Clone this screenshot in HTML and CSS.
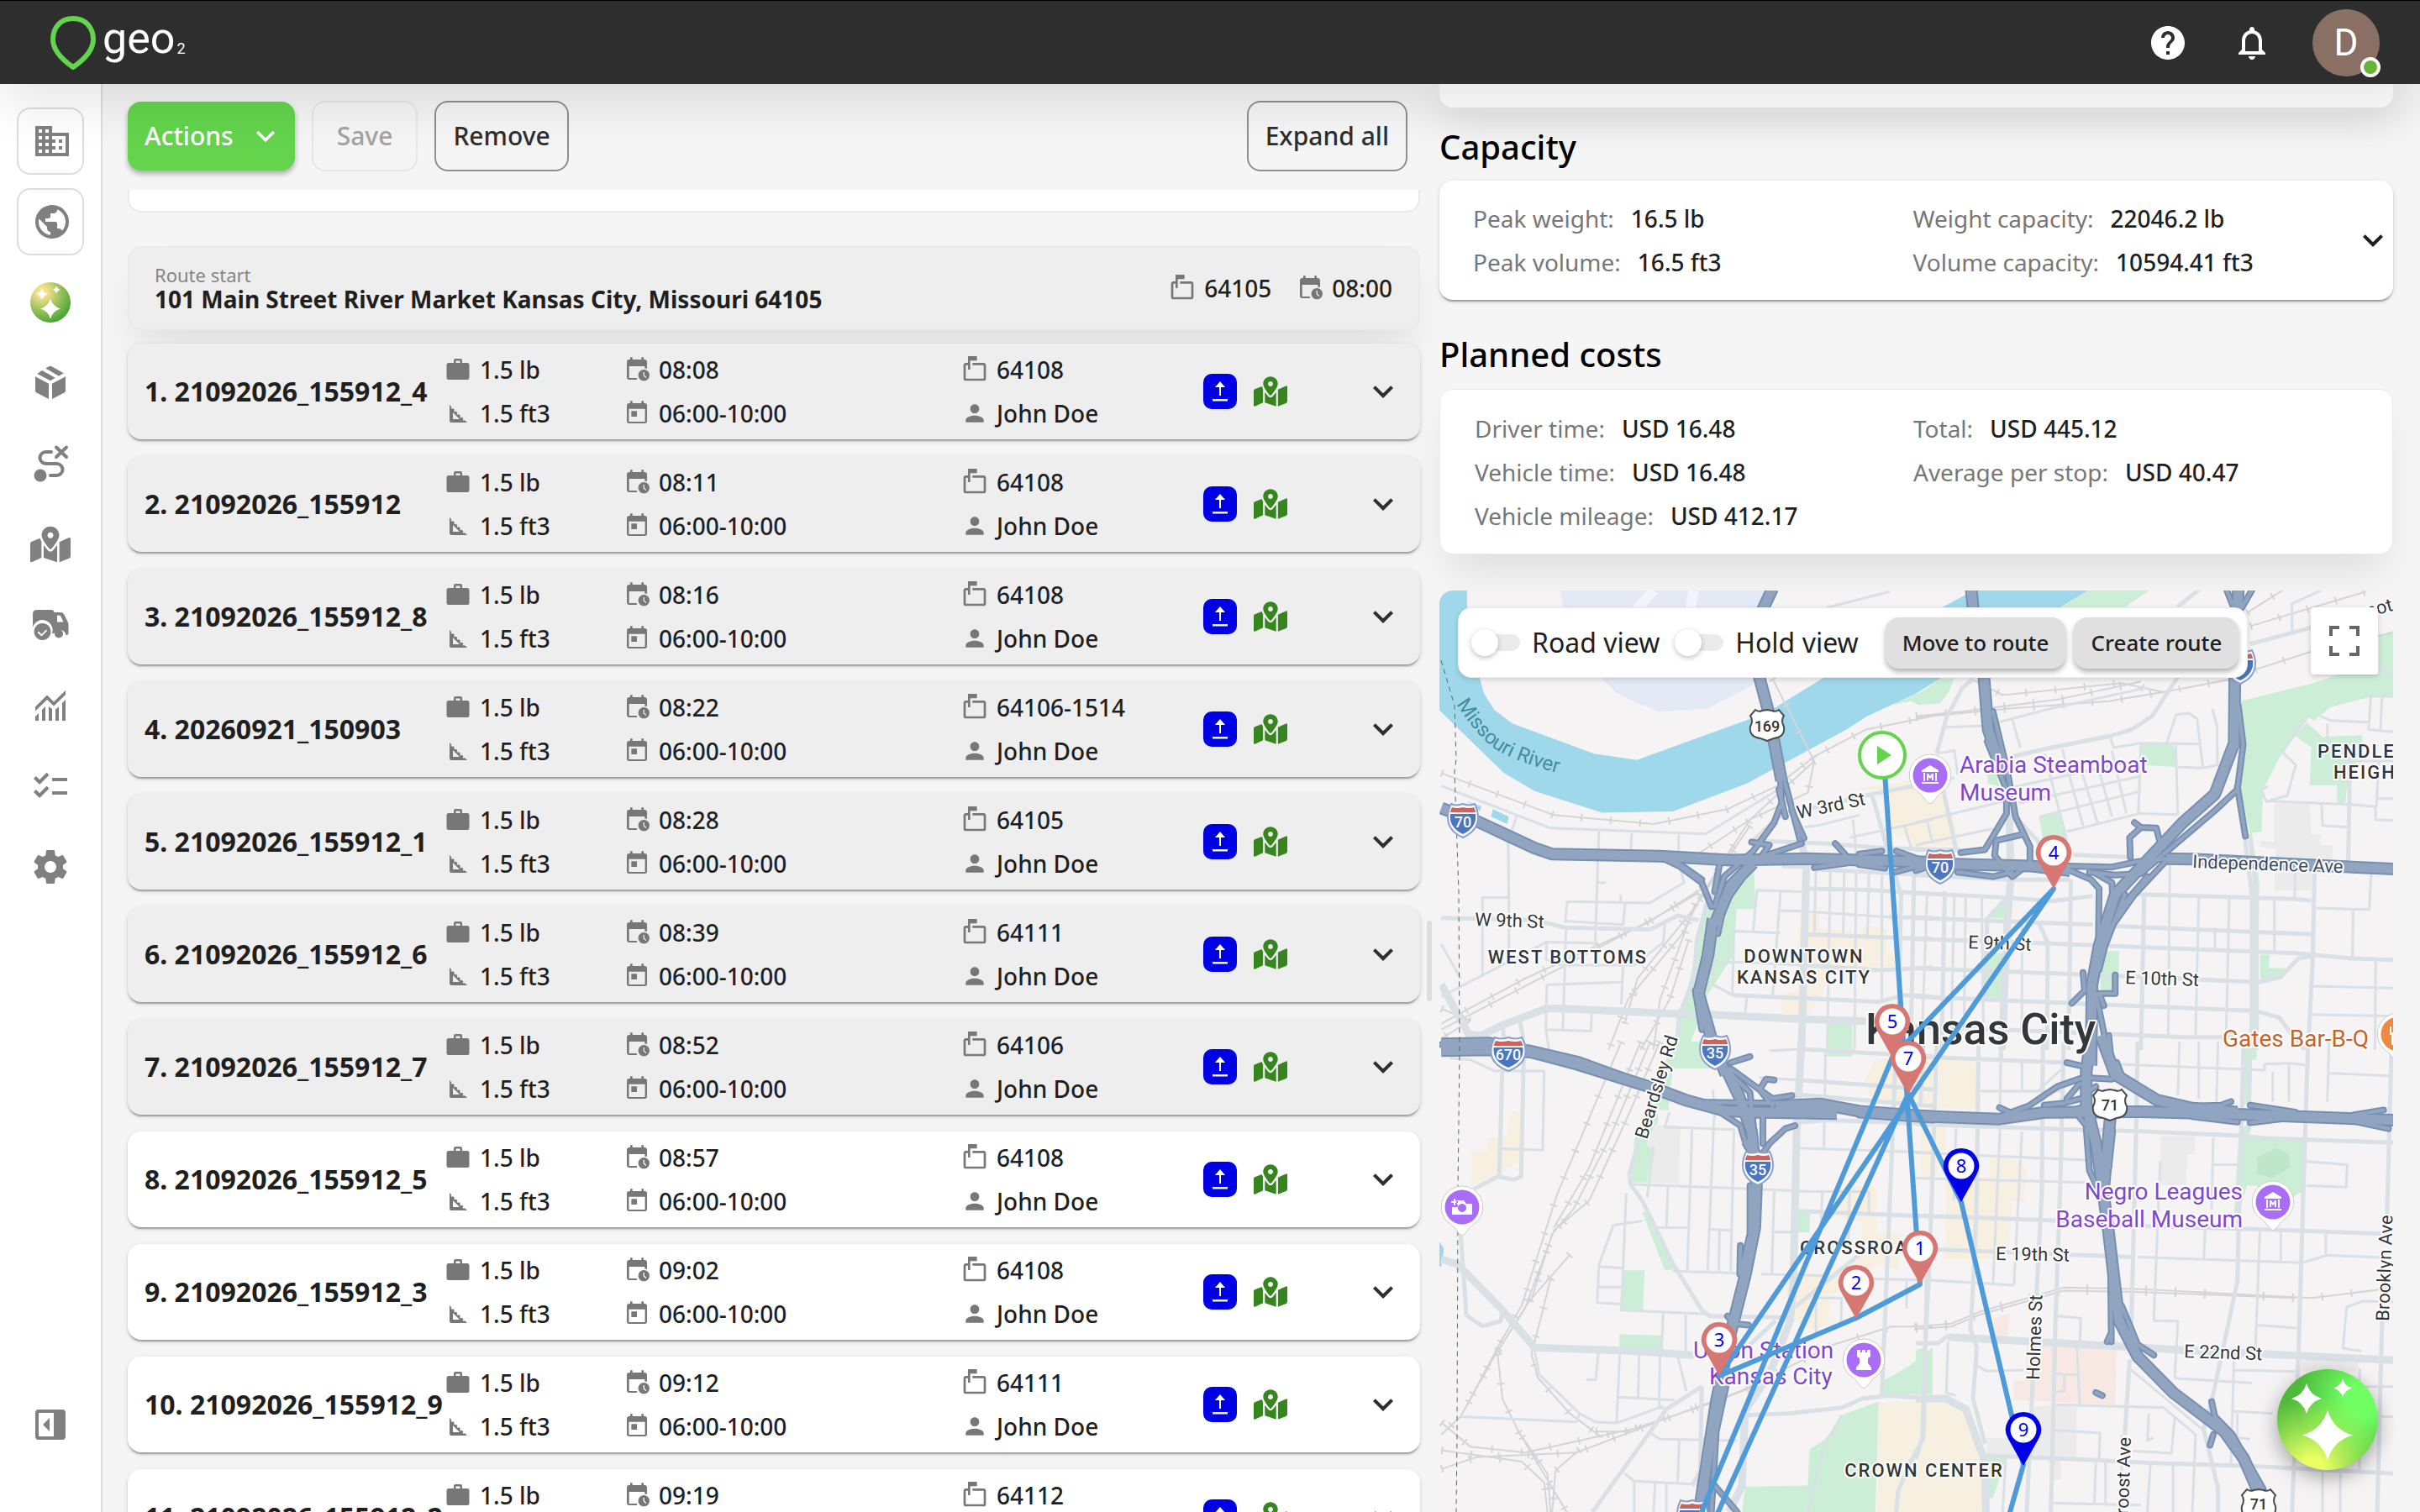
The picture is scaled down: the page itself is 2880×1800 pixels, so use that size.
FILE: index.html
```html
<!DOCTYPE html>
<html lang="en">
<head>
<meta charset="utf-8">
<meta name="viewport" content="width=device-width, initial-scale=1">
<title>geo2 – Route</title>
<link rel="stylesheet" href="styles.css">
</head>
<body>
<svg class="sprite" aria-hidden="true">
  <defs>
    <symbol id="i-domain" viewBox="0 0 24 24"><path d="M12 7V3H2v18h20V7H12zM6 19H4v-2h2v2zm0-4H4v-2h2v2zm0-4H4V9h2v2zm0-4H4V5h2v2zm4 12H8v-2h2v2zm0-4H8v-2h2v2zm0-4H8V9h2v2zm0-4H8V5h2v2zm10 12h-8v-2h2v-2h-2v-2h2v-2h-2V9h8v10zm-2-8h-2v2h2v-2zm0 4h-2v2h2v-2z"/></symbol>
    <symbol id="i-globe" viewBox="0 0 24 24"><path d="M12 2C6.480 2 2 6.480 2 12s4.480 10 10 10 10-4.480 10-10S17.520 2 12 2zm-1 17.930c-3.950-.49-7-3.850-7-7.930 0-.62.08-1.210.21-1.790L9 15v1c0 1.100.9 2 2 2v1.930zm6.900-2.540c-.26-.81-1-1.390-1.900-1.390h-1v-3c0-.55-.45-1-1-1H8v-2h2c.55 0 1-.45 1-1V7h2c1.100 0 2-.9 2-2v-.41c2.930 1.190 5 4.060 5 7.410 0 2.080-.8 3.970-2.100 5.390z"/></symbol>
    <symbol id="i-box" viewBox="0 0 48 48"><path d="M6 16.300l16 8.400V43L7.500 35.500Q6 34.700 6 33.200zM42 16.300L26 24.700V43l14.500-7.500q1.500-.8 1.500-2.300zM8.300 13L14 9l15.700 8.700-5.700 3.600zM18.300 6.600l4.500-2.500q1.200-.8 2.400 0L39.700 12.300 34 15.700z"/></symbol>
    <symbol id="i-route" viewBox="0 0 48 48"><circle cx="12" cy="38" r="7.500"/><path d="M24 38h7.500a6.500 6.500 0 0 0 0-14H18.500A7 7 0 0 1 18.500 10H25M31 4.500l12 11.500M43 4.500L31 16" fill="none" stroke="currentColor" stroke-width="4" stroke-linecap="round"/></symbol>
    <symbol id="i-map" viewBox="0 0 576 512"><path d="M288 0c-69.590 0-126 56.410-126 126 0 56.260 82.350 158.800 113.900 196.020 6.390 7.540 17.820 7.540 24.200 0C331.650 284.800 414 182.260 414 126 414 56.410 357.590 0 288 0zm0 168c-23.200 0-42-18.800-42-42s18.800-42 42-42 42 18.800 42 42-18.800 42-42 42zM20.120 215.950A32 32 0 0 0 0 245.660v250.320c0 11.320 11.430 19.060 21.940 14.860L160 448V214.920c-8.840-15.980-16.070-31.540-21.250-46.420L20.120 215.950zM288 359.670c-14.070 0-27.380-6.180-36.510-16.960-19.660-23.200-40.570-49.620-59.490-76.720v182l192 64V266c-18.920 27.090-39.820 53.520-59.490 76.720-9.130 10.770-22.440 16.950-36.510 16.950zm266.060-198.510L416 224v288l139.880-55.950A32 32 0 0 0 576 426.340V176.020c0-11.320-11.430-19.060-21.940-14.860z"/></symbol>
    <symbol id="i-truck" viewBox="0 0 48 48"><path fill-rule="evenodd" d="M8 6h17q3 0 3.500 3H36q3 0 4.500 3l4 8q1 2 1 4v9q0 3-2 3h-1a7.500 7.500 0 0 0-14-2h-2.500A12 12 0 0 0 3 26.500V11q0-5 5-5zm24 6.500v8h7.500l-3-6.500q-.6-1.500-2-1.500z"/><circle cx="34" cy="34.500" r="5"/><path fill-rule="evenodd" d="M14.500 22a10 10 0 1 0 .01 0zM10 31.500l3.500 3.500 5.500-5.500 1 1.500-6.500 6.500-5-4.500z"/></symbol>
    <symbol id="i-chart" viewBox="0 0 48 48"><path d="M6 37l4-4v9H6zM14 29l4-4v17h-4zM22 25l4 3v14h-4zM30 28.500l4-3V42h-4zM38 21l4-4v25h-4zM6 25.500L20 11.500l8 8L42 6v5L28 24.500l-8-7.500L6 30.500z"/></symbol>
    <symbol id="i-list" viewBox="0 0 24 24"><path d="M22 7h-9v2h9V7zM22 15h-9v2h9v-2zM5.540 11L2 7.460l1.410-1.410 2.120 2.120 4.240-4.240 1.410 1.410L5.540 11zM5.540 19L2 15.460l1.410-1.410 2.120 2.120 4.240-4.240 1.410 1.410L5.540 19z"/></symbol>
    <symbol id="i-gear" viewBox="0 0 24 24"><path d="M12 15.500A3.500 3.500 0 0 1 8.500 12 3.500 3.500 0 0 1 12 8.500a3.500 3.500 0 0 1 3.500 3.500 3.500 3.500 0 0 1-3.500 3.500m7.430-2.530c.04-.32.07-.64.07-.97s-.03-.66-.07-1l2.110-1.630c.19-.15.24-.42.12-.64l-2-3.460c-.12-.22-.39-.31-.61-.22l-2.490 1c-.52-.39-1.060-.73-1.690-.98l-.37-2.650A.506.506 0 0 0 14 2h-4c-.25 0-.46.18-.5.42l-.37 2.650c-.63.25-1.170.59-1.690.98l-2.490-1c-.22-.09-.49 0-.61.22l-2 3.460c-.13.22-.07.49.12.64L4.570 11c-.04.34-.07.67-.07 1s.03.65.07.97l-2.110 1.660c-.19.15-.25.42-.12.64l2 3.460c.12.22.39.3.61.22l2.490-1.010c.52.4 1.060.74 1.690.99l.37 2.650c.04.24.25.42.5.42h4c.25 0 .46-.18.5-.42l.37-2.650c.63-.26 1.170-.59 1.690-.99l2.490 1.010c.22.08.49 0 .61-.22l2-3.460c.12-.22.07-.49-.12-.64l-2.110-1.660z"/></symbol>
    <symbol id="i-collapse" viewBox="0 0 24 24"><path fill-rule="evenodd" d="M5 3h14a2 2 0 0 1 2 2v14a2 2 0 0 1-2 2H5a2 2 0 0 1-2-2V5a2 2 0 0 1 2-2zm0 2v14h9V5zm6.500 3v8l-4-4z"/></symbol>
    <symbol id="i-help" viewBox="0 0 24 24"><path d="M12 2C6.480 2 2 6.480 2 12s4.480 10 10 10 10-4.480 10-10S17.520 2 12 2zm1 17h-2v-2h2v2zm2.070-7.750l-.9.920C13.450 12.900 13 13.500 13 15h-2v-.5c0-1.100.45-2.100 1.170-2.830l1.240-1.260c.37-.36.59-.86.59-1.410 0-1.100-.9-2-2-2s-2 .9-2 2H8c0-2.210 1.790-4 4-4s4 1.790 4 4c0 .88-.36 1.680-.93 2.250z"/></symbol>
    <symbol id="i-bell" viewBox="0 0 24 24"><path d="M12 22c1.100 0 2-.9 2-2h-4c0 1.100.89 2 2 2zm6-6v-5c0-3.070-1.640-5.640-4.500-6.320V4c0-.83-.67-1.500-1.500-1.500s-1.500.67-1.500 1.500v.68C7.630 5.360 6 7.920 6 11v5l-2 2v1h16v-1l-2-2zm-2 1H8v-6c0-2.480 1.510-4.500 4-4.500s4 2.020 4 4.500v6z"/></symbol>
    <symbol id="i-chevron" viewBox="0 0 24 24"><path d="M16.590 8.590 12 13.170 7.410 8.590 6 10l6 6 6-6z"/></symbol>
    <symbol id="i-bag" viewBox="0 0 32 32"><path fill-rule="evenodd" d="M11 8V5q0-2 2-2h6q2 0 2 2v3h6q2.500 0 2.500 2.500v15Q29.500 28 27 28H5q-2.500 0-2.500-2.500v-15Q2.500 8 5 8zm2.500 0h5V5.500h-5z"/></symbol>
    <symbol id="i-ruler" viewBox="0 0 32 32"><path fill-rule="evenodd" d="M6 6l2.500 2.500-1 1L9 11l1-1 2 2-1 1 1.500 1.500 1-1 2 2-1 1L16 18l1-1 2 2-1 1 1.500 1.500 1-1 2 2-1 1L23 25l1-1 3 3H8q-2 0-2-2zm4 9v8h8z"/></symbol>
    <symbol id="i-clock" viewBox="0 0 24 24"><path d="M19 3h-1V1h-2v2H8V1H6v2H5C3.900 3 3 3.900 3 5v14c0 1.100.9 2 2 2h7v-1.500H5V9h14v2h2V5c0-1.100-.9-2-2-2z"/><path fill-rule="evenodd" d="M18.200 12a5 5 0 1 0 .01 0zm-.5 2.300h1v2.700l1.800 1.800-.7.700-2.100-2.100z"/></symbol>
    <symbol id="i-cal" viewBox="0 0 24 24"><path d="M7 10h5v5H7zM19 19.500H4.800V8H19.200V19.500m-.2-16.500h-1V1h-2v2H8V1H6v2H5C3.890 3 3 3.900 3 5v14a2 2 0 0 0 2 2h14a2 2 0 0 0 2-2V5a2 2 0 0 0-2-2z" fill-rule="evenodd"/></symbol>
    <symbol id="i-zip" viewBox="0 0 24 24"><path d="M20 6H10v2h10v12H4V8h2v4h2V4h6V0H6v6H4c-1.100 0-2 .9-2 2v12c0 1.100.9 2 2 2h16c1.100 0 2-.9 2-2V8c0-1.100-.9-2-2-2z"/></symbol>
    <symbol id="i-person" viewBox="0 0 24 24"><path d="M12 12c2.210 0 4-1.790 4-4s-1.790-4-4-4-4 1.790-4 4 1.790 4 4 4zm0 2c-2.670 0-8 1.340-8 4v2h16v-2c0-2.660-5.330-4-8-4z"/></symbol>
    <symbol id="i-up" viewBox="0 0 40 42"><rect width="40" height="42" rx="10" fill="#0000e6"/><path d="M20 9l6 7h-5v10h-2V16h-5zM11 30h18v2.500H11z" fill="#fff"/></symbol>
    <symbol id="i-full" viewBox="0 0 36 36"><path d="M0 0h12v4H4v8H0zM24 0h12v12h-4V4h-8zM0 24h4v8h8v4H0zM32 24h4v12H24v-4h8z"/></symbol>
    <symbol id="i-star" viewBox="-1 -1 2 2"><path d="M0-1Q.22-.22 1 0 .22.220 0 1-.22.220-1 0-.22-.22 0-1z"/></symbol>
    <symbol id="i-spark" viewBox="0 0 120 120">
      <use href="#i-star" x="17" y="16" width="36" height="38"/><use href="#i-star" x="67" y="11" width="22" height="23"/><use href="#i-star" x="30" y="48" width="60" height="61"/>
    </symbol>
    <symbol id="s-int" viewBox="0 0 40 44" preserveAspectRatio="none"><path d="M6 3q6 3 14 0 8 3 14 0 4 8 4 16 0 16-18 24Q2 35 2 19 2 11 6 3z" fill="#fff" stroke="#8ba0cd" stroke-width="2"/><path d="M7 7q6 2 13 0 7 2 13 0 2 4 2 6H5q0-2 2-6z" fill="#c96561"/><path d="M5 15h30q2 16-15 24Q3 31 5 15z" fill="#4a76c2"/></symbol>
    <symbol id="s-us" viewBox="0 0 44 40"><path d="M8 2q4 3 8 1l6-1 6 1q4 2 8-1l6 7q-4 6 0 13 2 12-12 14l-8 3-8-3Q0 34 2 22q4-7 0-13z" fill="#fff" stroke="#4b4b4b" stroke-width="2"/></symbol>
    <symbol id="p-poi" viewBox="0 0 52 62"><path d="M26 1a25 25 0 0 1 19 41Q36 48 30 57q-4 5-8 0-6-9-15-15A25 25 0 0 1 26 1z" fill="#fff" stroke="#ccc"/><circle cx="26" cy="26" r="20.500"/></symbol>
    <symbol id="p-museum" viewBox="0 0 24 24"><path fill-rule="evenodd" d="M12 1l10 6v2H2V7zM4 10h2v10H4zM18 10h2v10h-2zM2 21h20v2H2zM8 19v-8h2l2 3 2-3h2v8h-2v-4l-2 2-2-2v4z"/></symbol>
    <symbol id="p-pin" viewBox="0 0 44 66"><path d="M22 1a21 21 0 0 1 18 32L22 65 4 33A21 21 0 0 1 22 1z"/><circle cx="22" cy="22" r="15.500" fill="#fff"/></symbol>
  </defs>
</svg>

<header class="topbar">
  <a class="brand" href="#" aria-label="geo2">
    <svg class="brand-pin" viewBox="0 0 54 64"><path d="M27 3C12 3 3 14 3 28c0 13 11 24 24 33 13-9 24-20 24-33C51 14 42 3 27 3z" fill="none" stroke="#63d44c" stroke-width="6"/></svg>
    <span class="brand-name">geo</span><span class="brand-sub">2</span>
  </a>
  <div class="topbar-tools">
    <button class="ghost" aria-label="Help"><svg class="icon48"><use href="#i-help"/></svg></button>
    <button class="ghost" aria-label="Notifications"><svg class="icon48"><use href="#i-bell"/></svg></button>
    <button class="avatar" aria-label="Account">D<span class="online"></span></button>
  </div>
</header>

<div class="shell">
  <nav class="sidebar">
    <a class="nav boxed" href="#" aria-label="Company"><svg class="icon48"><use href="#i-domain"/></svg></a>
    <a class="nav boxed" href="#" aria-label="Region"><svg class="icon48"><use href="#i-globe"/></svg></a>
    <a class="nav" href="#" aria-label="Assistant"><svg class="icon48 spark"><use href="#i-spark"/></svg></a>
    <a class="nav" href="#" aria-label="Orders"><svg class="icon48"><use href="#i-box"/></svg></a>
    <a class="nav" href="#" aria-label="Planning"><svg class="icon48"><use href="#i-route"/></svg></a>
    <a class="nav" href="#" aria-label="Map"><svg class="icon48"><use href="#i-map"/></svg></a>
    <a class="nav" href="#" aria-label="Fleet"><svg class="icon48"><use href="#i-truck"/></svg></a>
    <a class="nav" href="#" aria-label="Reports"><svg class="icon48"><use href="#i-chart"/></svg></a>
    <a class="nav" href="#" aria-label="Tasks"><svg class="icon48"><use href="#i-list"/></svg></a>
    <a class="nav" href="#" aria-label="Settings"><svg class="icon48"><use href="#i-gear"/></svg></a>
    <button class="nav nav-end" aria-label="Expand menu"><svg class="icon48"><use href="#i-collapse"/></svg></button>
  </nav>

  <main class="stops-pane">
    <div class="toolbar">
      <button class="btn primary">Actions <svg class="icon44"><use href="#i-chevron"/></svg></button>
      <button class="btn" disabled>Save</button>
      <button class="btn">Remove</button>
      <button class="btn push">Expand all</button>
    </div>
    <div class="card-tail"></div>
    <section class="route-start">
      <div>
        <p class="caption">Route start</p>
        <p class="address">101 Main Street River Market Kansas City, Missouri 64105</p>
      </div>
      <div class="start-meta">
        <span class="fact"><svg class="icon32"><use href="#i-zip"/></svg>64105</span>
        <span class="fact"><svg class="icon32"><use href="#i-clock"/></svg>08:00</span>
      </div>
    </section>
    <ul class="stops">
      <li class="stop done"><h3>1. 21092026_155912_4</h3>
        <div><span class="fact"><svg class="icon32"><use href="#i-bag"/></svg>1.5 lb</span><span class="fact"><svg class="icon32"><use href="#i-ruler"/></svg>1.5 ft3</span></div>
        <div><span class="fact"><svg class="icon32"><use href="#i-clock"/></svg>08:08</span><span class="fact"><svg class="icon32"><use href="#i-cal"/></svg>06:00-10:00</span></div>
        <div><span class="fact"><svg class="icon32"><use href="#i-zip"/></svg>64108</span><span class="fact"><svg class="icon32"><use href="#i-person"/></svg>John Doe</span></div>
        <div class="marks"><svg class="up"><use href="#i-up"/></svg><svg class="on-map"><use href="#i-map"/></svg></div>
        <button class="ghost more" aria-label="Expand stop"><svg class="icon48"><use href="#i-chevron"/></svg></button></li>
      <li class="stop done"><h3>2. 21092026_155912</h3>
        <div><span class="fact"><svg class="icon32"><use href="#i-bag"/></svg>1.5 lb</span><span class="fact"><svg class="icon32"><use href="#i-ruler"/></svg>1.5 ft3</span></div>
        <div><span class="fact"><svg class="icon32"><use href="#i-clock"/></svg>08:11</span><span class="fact"><svg class="icon32"><use href="#i-cal"/></svg>06:00-10:00</span></div>
        <div><span class="fact"><svg class="icon32"><use href="#i-zip"/></svg>64108</span><span class="fact"><svg class="icon32"><use href="#i-person"/></svg>John Doe</span></div>
        <div class="marks"><svg class="up"><use href="#i-up"/></svg><svg class="on-map"><use href="#i-map"/></svg></div>
        <button class="ghost more" aria-label="Expand stop"><svg class="icon48"><use href="#i-chevron"/></svg></button></li>
      <li class="stop done"><h3>3. 21092026_155912_8</h3>
        <div><span class="fact"><svg class="icon32"><use href="#i-bag"/></svg>1.5 lb</span><span class="fact"><svg class="icon32"><use href="#i-ruler"/></svg>1.5 ft3</span></div>
        <div><span class="fact"><svg class="icon32"><use href="#i-clock"/></svg>08:16</span><span class="fact"><svg class="icon32"><use href="#i-cal"/></svg>06:00-10:00</span></div>
        <div><span class="fact"><svg class="icon32"><use href="#i-zip"/></svg>64108</span><span class="fact"><svg class="icon32"><use href="#i-person"/></svg>John Doe</span></div>
        <div class="marks"><svg class="up"><use href="#i-up"/></svg><svg class="on-map"><use href="#i-map"/></svg></div>
        <button class="ghost more" aria-label="Expand stop"><svg class="icon48"><use href="#i-chevron"/></svg></button></li>
      <li class="stop done"><h3>4. 20260921_150903</h3>
        <div><span class="fact"><svg class="icon32"><use href="#i-bag"/></svg>1.5 lb</span><span class="fact"><svg class="icon32"><use href="#i-ruler"/></svg>1.5 ft3</span></div>
        <div><span class="fact"><svg class="icon32"><use href="#i-clock"/></svg>08:22</span><span class="fact"><svg class="icon32"><use href="#i-cal"/></svg>06:00-10:00</span></div>
        <div><span class="fact"><svg class="icon32"><use href="#i-zip"/></svg>64106-1514</span><span class="fact"><svg class="icon32"><use href="#i-person"/></svg>John Doe</span></div>
        <div class="marks"><svg class="up"><use href="#i-up"/></svg><svg class="on-map"><use href="#i-map"/></svg></div>
        <button class="ghost more" aria-label="Expand stop"><svg class="icon48"><use href="#i-chevron"/></svg></button></li>
      <li class="stop done"><h3>5. 21092026_155912_1</h3>
        <div><span class="fact"><svg class="icon32"><use href="#i-bag"/></svg>1.5 lb</span><span class="fact"><svg class="icon32"><use href="#i-ruler"/></svg>1.5 ft3</span></div>
        <div><span class="fact"><svg class="icon32"><use href="#i-clock"/></svg>08:28</span><span class="fact"><svg class="icon32"><use href="#i-cal"/></svg>06:00-10:00</span></div>
        <div><span class="fact"><svg class="icon32"><use href="#i-zip"/></svg>64105</span><span class="fact"><svg class="icon32"><use href="#i-person"/></svg>John Doe</span></div>
        <div class="marks"><svg class="up"><use href="#i-up"/></svg><svg class="on-map"><use href="#i-map"/></svg></div>
        <button class="ghost more" aria-label="Expand stop"><svg class="icon48"><use href="#i-chevron"/></svg></button></li>
      <li class="stop done"><h3>6. 21092026_155912_6</h3>
        <div><span class="fact"><svg class="icon32"><use href="#i-bag"/></svg>1.5 lb</span><span class="fact"><svg class="icon32"><use href="#i-ruler"/></svg>1.5 ft3</span></div>
        <div><span class="fact"><svg class="icon32"><use href="#i-clock"/></svg>08:39</span><span class="fact"><svg class="icon32"><use href="#i-cal"/></svg>06:00-10:00</span></div>
        <div><span class="fact"><svg class="icon32"><use href="#i-zip"/></svg>64111</span><span class="fact"><svg class="icon32"><use href="#i-person"/></svg>John Doe</span></div>
        <div class="marks"><svg class="up"><use href="#i-up"/></svg><svg class="on-map"><use href="#i-map"/></svg></div>
        <button class="ghost more" aria-label="Expand stop"><svg class="icon48"><use href="#i-chevron"/></svg></button></li>
      <li class="stop done"><h3>7. 21092026_155912_7</h3>
        <div><span class="fact"><svg class="icon32"><use href="#i-bag"/></svg>1.5 lb</span><span class="fact"><svg class="icon32"><use href="#i-ruler"/></svg>1.5 ft3</span></div>
        <div><span class="fact"><svg class="icon32"><use href="#i-clock"/></svg>08:52</span><span class="fact"><svg class="icon32"><use href="#i-cal"/></svg>06:00-10:00</span></div>
        <div><span class="fact"><svg class="icon32"><use href="#i-zip"/></svg>64106</span><span class="fact"><svg class="icon32"><use href="#i-person"/></svg>John Doe</span></div>
        <div class="marks"><svg class="up"><use href="#i-up"/></svg><svg class="on-map"><use href="#i-map"/></svg></div>
        <button class="ghost more" aria-label="Expand stop"><svg class="icon48"><use href="#i-chevron"/></svg></button></li>
      <li class="stop"><h3>8. 21092026_155912_5</h3>
        <div><span class="fact"><svg class="icon32"><use href="#i-bag"/></svg>1.5 lb</span><span class="fact"><svg class="icon32"><use href="#i-ruler"/></svg>1.5 ft3</span></div>
        <div><span class="fact"><svg class="icon32"><use href="#i-clock"/></svg>08:57</span><span class="fact"><svg class="icon32"><use href="#i-cal"/></svg>06:00-10:00</span></div>
        <div><span class="fact"><svg class="icon32"><use href="#i-zip"/></svg>64108</span><span class="fact"><svg class="icon32"><use href="#i-person"/></svg>John Doe</span></div>
        <div class="marks"><svg class="up"><use href="#i-up"/></svg><svg class="on-map"><use href="#i-map"/></svg></div>
        <button class="ghost more" aria-label="Expand stop"><svg class="icon48"><use href="#i-chevron"/></svg></button></li>
      <li class="stop"><h3>9. 21092026_155912_3</h3>
        <div><span class="fact"><svg class="icon32"><use href="#i-bag"/></svg>1.5 lb</span><span class="fact"><svg class="icon32"><use href="#i-ruler"/></svg>1.5 ft3</span></div>
        <div><span class="fact"><svg class="icon32"><use href="#i-clock"/></svg>09:02</span><span class="fact"><svg class="icon32"><use href="#i-cal"/></svg>06:00-10:00</span></div>
        <div><span class="fact"><svg class="icon32"><use href="#i-zip"/></svg>64108</span><span class="fact"><svg class="icon32"><use href="#i-person"/></svg>John Doe</span></div>
        <div class="marks"><svg class="up"><use href="#i-up"/></svg><svg class="on-map"><use href="#i-map"/></svg></div>
        <button class="ghost more" aria-label="Expand stop"><svg class="icon48"><use href="#i-chevron"/></svg></button></li>
      <li class="stop"><h3>10. 21092026_155912_9</h3>
        <div><span class="fact"><svg class="icon32"><use href="#i-bag"/></svg>1.5 lb</span><span class="fact"><svg class="icon32"><use href="#i-ruler"/></svg>1.5 ft3</span></div>
        <div><span class="fact"><svg class="icon32"><use href="#i-clock"/></svg>09:12</span><span class="fact"><svg class="icon32"><use href="#i-cal"/></svg>06:00-10:00</span></div>
        <div><span class="fact"><svg class="icon32"><use href="#i-zip"/></svg>64111</span><span class="fact"><svg class="icon32"><use href="#i-person"/></svg>John Doe</span></div>
        <div class="marks"><svg class="up"><use href="#i-up"/></svg><svg class="on-map"><use href="#i-map"/></svg></div>
        <button class="ghost more" aria-label="Expand stop"><svg class="icon48"><use href="#i-chevron"/></svg></button></li>
      <li class="stop"><h3>11. 21092026_155912_2</h3>
        <div><span class="fact"><svg class="icon32"><use href="#i-bag"/></svg>1.5 lb</span><span class="fact"><svg class="icon32"><use href="#i-ruler"/></svg>1.5 ft3</span></div>
        <div><span class="fact"><svg class="icon32"><use href="#i-clock"/></svg>09:19</span><span class="fact"><svg class="icon32"><use href="#i-cal"/></svg>06:00-10:00</span></div>
        <div><span class="fact"><svg class="icon32"><use href="#i-zip"/></svg>64112</span><span class="fact"><svg class="icon32"><use href="#i-person"/></svg>John Doe</span></div>
        <div class="marks"><svg class="up"><use href="#i-up"/></svg><svg class="on-map"><use href="#i-map"/></svg></div>
        <button class="ghost more" aria-label="Expand stop"><svg class="icon48"><use href="#i-chevron"/></svg></button></li>
    </ul>
  </main>

  <div class="splitter" role="separator"></div>

  <aside class="detail-pane">
    <div class="panel-tail"></div>
    <h2 class="near">Capacity</h2>
    <section class="panel raised">
      <dl class="facts">
        <div><dt>Peak weight:</dt><dd>16.5 lb</dd></div>
        <div><dt>Weight capacity:</dt><dd>22046.2 lb</dd></div>
        <div><dt>Peak volume:</dt><dd>16.5 ft3</dd></div>
        <div><dt>Volume capacity:</dt><dd>10594.41 ft3</dd></div>
      </dl>
      <button class="ghost" aria-label="Expand capacity"><svg class="icon48"><use href="#i-chevron"/></svg></button>
    </section>
    <h2>Planned costs</h2>
    <section class="panel soft">
      <dl class="facts">
        <div><dt>Driver time:</dt><dd>USD 16.48</dd></div>
        <div><dt>Total:</dt><dd>USD 445.12</dd></div>
        <div><dt>Vehicle time:</dt><dd>USD 16.48</dd></div>
        <div><dt>Average per stop:</dt><dd>USD 40.47</dd></div>
        <div><dt>Vehicle mileage:</dt><dd>USD 412.17</dd></div>
      </dl>
    </section>
    <section class="map">
      <svg class="map-canvas" viewBox="1713 703 1135 1097" preserveAspectRatio="xMinYMin slice">
        <defs>
          <g id="rails">
            <g transform="translate(1700 690) scale(.38265 .35714)"><path d="M40 645L390 785 700 815 930 765 1080 690 1200 590 1360 500 1568 455M1070 330L1200 605 1180 710 1000 800 830 920M1200 605L1000 800 850 1050 790 1180 620 1400 560 1568M840 1045L700 1130 400 1300 40 1500M830 1080L720 1400 700 1568M1000 820L830 1090 650 1330 610 1480M850 1030L680 1145 300 1330 40 1480M810 1200L750 1400 660 1568M40 1430L130 1470 40 1530"/></g>
            <g transform="translate(2280 690) scale(.38265 .35714)"><path d="M0 460L290 430 600 405 770 375 1040 320M170 330L270 385 640 345 770 375M0 455L140 440 440 400 700 340M1030 110L1140 36M1040 155L1400 40M1055 300L1230 240 1490 175"/></g>
            <g transform="translate(1700 1240) scale(.38265 .35714)"><path d="M720 0L620 250 500 530 390 630 300 890 210 1040 100 1250 40 1310M600 0L490 280 400 510 370 610 290 880 225 1000 100 1250M690 0L560 330 450 560 385 640 320 860M660 0L500 420 390 620M440 710L310 870 210 1040M380 790L350 920 320 1040 340 1120 440 1240 540 1320M215 1040L230 1190 280 1300 370 1440 380 1568M40 1270L130 1350 300 1370 640 1290 880 1205 1060 1130M40 1425L150 1385 460 1370 780 1240 970 1165 1260 1010 1440 950 1568 950M40 1362L290 1400 360 1470 370 1568M470 1360L395 1430 385 1568M280 1300L430 1568M520 1300L640 1300"/></g>
            <g transform="translate(2280 1240) scale(.38265 .35714)"><path d="M0 950L110 940 200 900 460 820 700 825 1230 855 1490 820M0 958L110 950 200 910 460 830 700 835 1180 855"/></g>
          </g>
          <g id="highways">
            <g transform="translate(1700 690) scale(.38265 .35714)">
              <path class="w14" d="M1070 30L1035 110 1030 330 1055 430 1098 670M40 762L150 805 330 895 385 915 720 922 940 935 1180 930 1568 942M1010 945L940 1020 890 1150M885 1130L870 1250 840 1380 880 1530 925 1650M40 1548L190 1545 340 1580"/>
              <path class="w8" d="M1095 660L1098 745 1075 810 1010 905 920 990 890 1090M1105 660L1155 865M1130 770L1168 862M1090 700L1110 790M720 925L780 955 850 1010 880 1090M750 925L850 1000M905 950L890 1040M1005 935L1160 880M1005 875L1060 885 1030 930M1265 880L1295 915M1340 915L1410 905M1455 905L1520 930M1200 960L1300 945M1340 950L1420 962M1450 975L1540 950M1000 960L920 1080 900 1180M870 1180L850 1320M830 1370L850 1500"/>
            </g>
            <g transform="translate(2280 690) scale(.38265 .35714)">
              <path class="w14" d="M172 30L178 92 212 330 225 500 270 640M1003 30L1000 110 992 330 990 560M992 540L930 715 830 810 620 1050 570 1220 548 1350 545 1620M0 945L360 955 480 970M780 930L860 932 1490 965"/>
              <path class="w8" d="M222 540L282 700 282 780 215 900 140 910M240 440L285 640 310 790 355 890 355 950M965 30L988 92M1048 30L1015 92M1003 420L1018 550 1000 700 930 770 700 980M1000 690L1025 855M680 810L700 826 748 828 758 870M700 826L665 860 667 925M250 870L245 920 300 990 355 945M250 870L330 850M480 970L545 1000 570 1030 568 1200M470 955L610 958 690 940 780 930M540 975L620 985 700 980M560 980L610 1010 612 1060M780 935L680 1050 600 1170 570 1300M720 990L640 1090 590 1200M650 1050L560 1300M520 1310L525 1370 485 1412M620 1318L620 1380 570 1380M560 1380L600 1590M570 1380L585 1420M130 975L240 990 300 975M0 970L30 960"/>
            </g>
            <g transform="translate(1700 1240) scale(.38265 .35714)">
              <path class="w14" d="M40 30L180 27 320 35 460 75 700 155 800 195 920 230 1010 235 1270 240M1080 215L1220 208 1340 232 1568 250M925 90L965 180 1005 300 1020 480 1015 620 985 780 940 970 895 1200 840 1580M990 330L1020 380"/>
              <path class="w8" d="M40 10L190 14M310 20L470 60 700 150M860 202L1080 205M1340 245L1568 262M915 80L1000 170 1020 380M935 1100L895 1300 880 1568M920 1120L875 1350 860 1568M940 70L1000 50M940 90L1030 160 1070 190 1130 180M1030 160L1050 125 1075 128M900 230L970 280 990 350M1040 240L1040 340M1035 380L1060 340 1110 290 1140 280M1070 215L1030 160M970 680L968 775M1000 480L1000 640 970 775M930 915L950 940 995 945M890 1480L960 1568M860 1400L845 1480"/>
            </g>
            <g transform="translate(2280 1240) scale(.38265 .35714)">
              <path class="w14" d="M0 248L260 258 400 236 700 234 1000 242 1490 262M545 -20L530 100 530 210 560 340 580 480 600 640 632 930 690 1050 800 1170 960 1300 1020 1390 1065 1500M575 -20L620 110 750 195 860 222 1000 235M605 250L597 340 585 480"/>
              <path class="w8" d="M600 -20L612 110M625 70L650 140M260 250L350 215 440 150 520 120 610 125M470 70L530 85M260 220L300 240M400 212L460 205 530 185M470 190L510 140M450 245L540 210M530 170L560 150M530 290L540 430 570 500M612 300L600 420M605 640L608 1000M595 1000L608 970M640 880L690 1010 740 1045M920 1200L930 1250 985 1310 1080 1490M915 1345L925 1310M860 215L950 212 980 200M860 250L1000 268M1040 212L1180 235M1040 270L1160 255M1360 245L1455 228M1360 265L1470 290M500 240L530 280M580 1180L560 1170"/>
            </g>
          </g>
          <path id="river-line" d="M1733 838Q1752 868 1772 886T1860 922"/>
        </defs>
        <rect x="1713" y="703" width="1135" height="1097" fill="#f5f3f4"/>

        <g transform="translate(1700 690) scale(.38265 .35714)">
          <path class="air" d="M408 30H1060L1010 350 870 430 720 440 650 412 585 378 540 330 420 92z"/>
          <path class="runway" d="M700 36L640 110M825 36L815 95"/>
          <path class="water" d="M0 0H120V95L160 330 172 378 205 435 262 480 515 580 648 601 1050 445 1225 330 1600 92 1706 30H2065L1965 92 1591 330 1516 380 1365 455 1300 500 990 680 760 773 540 777 330 705 235 645 0 400zM200 765L250 790 245 815 195 790zM120 740L165 755 160 772z"/>
          <path class="park" d="M1440 418L1540 370 1591 330H1634L1621 370 1591 412 1525 418 1500 405zM2060 30H2250L2166 92H1966zM1012 965L1018 1098H958L950 1250 870 1380 800 1590H760L840 1200 870 1080zM1240 1475H1318V1590H1240z"/>
          <path class="biz" d="M1310 700L1568 660V890H1500L1495 855 1450 850 1400 700zM1150 1155H1185V1112H1215V1165L1315 1168 1320 1200 1360 1150 1425 1165V1250H1450V1290H1260L1210 1400 1180 1450H1100V1380L1150 1370z"/>
        </g>
        <g transform="translate(2280 690) scale(.38265 .35714)">
          <path class="park" d="M1010 405L1235 345 1320 315H1440V185L1500 165V385L1400 395 1290 425 1240 470 1220 460 1140 575 1080 700 1075 840 1045 845 1068 1000 1060 1600H1035L1050 1050 1040 850 1005 690 1025 550zM1180 520L1215 475 1265 525 1388 518V555L1340 700 1335 748H1310V685H1225L1230 560zM703 548H800L815 625 705 618zM383 790L450 773 470 870 400 890zM1070 1250H1100L1098 1295H1150L1130 1325 1072 1335zM570 1238H632L630 1370H575zM285 1065V1128H230zM218 1245H275L268 1395 215 1392zM220 640L250 640 260 690 225 680z"/>
          <path class="plot" d="M1115 745H1225L1230 850H1258V885H1295V935L1235 950 1230 1035H1115L1120 900 1070 890V870L1115 875z"/>
          <path class="biz" d="M0 690H85L140 880 0 895z"/>
        </g>
        <g transform="translate(1700 1240) scale(.38265 .35714)">
          <path class="park" d="M770 0H840L900 90H760L745 230 710 225 715 260 690 350 697 355 680 470H630L640 330 740 60zM665 570L680 565 762 760 735 762zM607 762H672L667 895 600 892zM594 975L725 980 722 1028H575L594 1015zM1148 570L1187 572 1185 637 1146 635zM1568 1020L1490 1085 1415 1130 1405 1180 1568 1175zM1285 1245L1400 1200 1390 1568H975L985 1483 1180 1480 1185 1360 1235 1325zM1240 0H1315L1312 30H1240z"/>
          <path class="plot" d="M705 278L783 280 780 475 690 470 697 355 675 345z"/>
          <path class="biz" d="M132 365H183L185 322 245 310 250 250 265 228 285 240V400L230 430 135 480zM1400 1205L1590 1200V1568H1395zM1390 60L1568 50V210L1380 200 1355 130zM1280 475L1395 485V640H1465L1460 765 1350 720 1345 600 1270 580zM1115 780H1240L1340 710 1430 720 1250 850 1245 945 1200 960 1115 920zM1530 250H1568V450H1530z"/>
          <path class="water" d="M30 660L48 690 40 750H30z"/>
        </g>
        <g transform="translate(2280 1240) scale(.38265 .35714)">
          <path class="biz" d="M70 60L195 62V225L70 222zM20 280L90 285 97 350 60 455 15 450zM230 385L290 390 345 420 335 535 300 530 285 725H90L95 530 90 450H230zM0 1200H100L155 1240 215 1390V1568H0z"/>
          <path class="plot" d="M762 315H868V375H845L840 478H760zM370 1215L500 1210V1385L450 1395V1460H420L415 1385 220 1380 222 1320H350zM1200 1050L1380 1060 1370 1100H1190z"/>
          <path class="clinic" d="M240 925L293 905 285 990H250zM345 1015L625 1020 620 1210 303 1195 305 1130H340z"/>
          <path class="park" d="M1040 322L1205 330 1200 500 1110 560 1060 480H1030L1005 570H990L1005 300 1035 270zM1015 0H1040L1030 210H1008zM222 1385H282L240 1522H218zM0 1030L25 1020V1170H0z"/>
          <path class="grove" d="M1062 385L1120 355 1160 375 1165 420 1105 455 1062 440z"/>
        </g>

        <use href="#rails" class="rail"/><use href="#rails" class="ties"/>

        <g class="roads" transform="translate(1700 690) scale(.38265 .35714)">
          <path d="M40 688L378 828 862 848 1080 705M275 788L248 870 250 1060H168V1325M250 1060V1280M530 840L516 1290M632 845L630 900M778 850V905M522 1010H552M598 1050V1078M425 1145L432 1073 688 1078 795 1010 780 950M612 1078L605 1150 425 1138M40 1390L368 1208 515 1212M428 1160L418 1500M368 1208L365 1265 410 1285H640L730 1210 735 1150M368 1350L600 1342M605 1290L600 1415M368 1350L365 1500 505 1505 508 1440M365 1500L375 1568M40 1215L100 1330M1170 825L1210 820 1340 785M1240 93L1435 40M1310 860L1568 800M1020 1035L1160 1040M1085 1103L1160 1105 1430 1125M950 1172L1095 1178M890 1278L950 1275 1170 1285M885 1350L945 1385M1022 1035L1010 1170M1095 1040L1070 1395M1205 970L1200 1180M1250 970L1240 1568M1293 970L1290 1180M1330 980L1325 1568M1370 975L1365 1200M1410 975V1400M950 1172L945 1385M885 1280V1350M990 1390L985 1450M1320 800L1335 960M1480 820L1500 890M1550 800L1568 880"/>
          <path class="w6" d="M40 1128L330 1135 425 1160 690 1166 775 1120 840 1135M1010 870L1090 790 1140 775 1380 715 1500 690 1568 675M1010 870L1240 880 1420 895 1568 900M1380 720L1420 870 1440 950 1470 1050 1460 1568M1180 1030L1380 1035 1568 1048M1430 1125L1568 1128M1180 1183L1568 1198M1170 1285L1400 1302 1568 1293M945 1385L1160 1395 1400 1408 1480 1385 1568 1390M950 955L865 1080 835 1200 825 1330 780 1450 770 1568M1510 985L1500 1568M1195 965L1568 985M230 1485L235 1525M285 1475L295 1530M1100 955L1180 958"/>
          <path class="w8" d="M1160 865L1175 960 1160 1568M40 1350L125 1515 165 1520 230 1485 365 1430 420 1430 790 1448 870 1450 1160 1465 1360 1472"/>
        </g>
        <g class="roads" transform="translate(2280 690) scale(.38265 .35714)">
          <path d="M92 492L215 487 420 430 720 360M300 465L325 560M605 525L615 560 700 545 885 548M815 625L895 628 938 618 937 490 922 430M700 545L692 780 815 783 808 545M780 545L810 450 850 445 875 465 893 628M0 810L270 740M0 885L240 830M60 680L120 660M320 745L700 655M310 690L695 600M385 790L700 705M470 840L695 780M65 580L120 570 130 650M400 580L470 870M455 565L520 820M510 620L565 810M560 600L610 790M610 570L655 780M1220 455L1140 575 1182 618 1155 720 1090 740 1075 700 1095 690M1090 738L1350 750 1430 757V800L1490 803M1262 750L1265 820 1345 825M1415 388L1408 500 1490 508M1415 388L1490 390M1450 388L1445 500M1258 455L1290 470 1405 475M1280 480V580M1370 605H1490M1440 605L1432 757M1435 730H1490M1245 1095L1410 1100 1418 950M1235 1355L1490 1362M1230 1450L1490 1455M155 1055L150 1500M205 1060L210 1500M35 1050L20 1500M120 1055L110 1500M330 1140V1500M632 1060V1130M790 950L785 1520M880 1055L870 1520M975 1060L965 1520M930 1160V1240M1115 1060V1240M1360 1105L1358 1260M1430 1270L1428 1568M1180 960L1178 1065M1170 170V80L1260 36M1440 290L1490 320"/>
          <path class="w6" d="M180 330L145 360 95 460 65 580M300 590L400 565 610 520 670 500 735 455 830 300M815 90L885 30M1040 215L1230 160M85 700L125 900M490 918L660 925M0 900H140M0 985L300 1000 480 1000M0 1045L280 1060 420 1072 550 1055M670 1048L1180 1065 1230 1070M0 1128L550 1150M620 1155L1230 1182M0 1198L220 1205 1180 1245 1350 1262 1490 1268M0 1295L560 1318 1065 1342 1135 1325 1190 1262 1235 1255M0 1390L480 1412 1060 1438 1130 1460 1165 1510 1210 1568M600 1515L840 1525 1040 1525M0 1490L500 1510M90 1040L80 1568M282 1060L222 1130 215 1400M482 1000L475 1568M380 1140L410 1210 408 1568M710 1055L700 1568M1022 850L1045 1050V1568M1038 850L1060 1050V1568M1240 960L1235 1255 1220 1568M1350 600L1345 940M310 790L395 890"/>
          <path class="w8" d="M290 720L295 1000 285 1130 268 1568"/>
        </g>
        <g class="roads" transform="translate(1700 1240) scale(.38265 .35714)">
          <path d="M65 55L130 60 205 98H360L355 362 225 357M690 1305L720 1325 960 1330M610 1440L640 1465 820 1475M595 1040L585 1272M655 1045L652 1185M720 1045L717 1220 740 1222M775 1048L802 1165M765 1195L590 1185M528 1038L520 1128 490 1127M100 1250L460 1268 470 1240M330 1030L345 1110 470 1240 520 1268 585 1272 730 1215M625 475L860 485 1190 500 1370 500M750 235L735 285 950 293 940 765M820 285L805 765M888 255L868 768M745 480L740 620M615 505L600 895 870 908M532 750L605 755M665 598L575 612 530 745 525 870 600 875M527 818H600M700 350L680 520M710 620H808M875 625L940 630M905 625L903 765M760 765L960 772M1035 775L1240 780M730 905L725 1030M800 905V1040M885 160L890 255M1075 495L1068 775M1075 635H1150M1235 30L1230 355M1225 500L1220 640M1310 500L1305 710M1205 855H1285L1283 940M1350 790L1568 795M1487 790V890M1030 120L1150 128M1205 855V980M1150 355L1568 370M1370 500V570M1060 30L1160 25M1285 1245L1230 1350 1180 1568M640 1465V1568M705 1470L700 1568M780 1325L775 1470M740 1470V1568"/>
          <path class="w6" d="M296 60L288 450 265 460 215 450 140 492M230 70L220 450M1160 25L1568 50M1150 128L1568 160M1130 175L1568 215M1150 565L1568 583M1150 270L1240 262 1568 275M1340 710L1140 885M1080 930L960 1050M655 330L625 440 628 475 665 530 760 740 850 895 875 915 1130 920M850 1150L845 1430 820 1480M1455 0L1440 400 1410 1180M1540 0L1530 210M100 640L118 912 168 948 225 932 230 895M985 1245L1120 1240 1285 1220 1350 1190 1430 1180 1568 1190M1550 780L1540 1320 1500 1400 1460 1500 1455 1568M510 1568L690 1300 740 1225 850 1150"/>
          <path class="w8" d="M40 725L90 742 230 895 330 1020 600 1030 825 1045M1160 0L1145 300 1135 800 1125 930 1060 1110 985 1230 975 1480 935 1568"/>
        </g>
        <g class="roads" transform="translate(2280 1240) scale(.38265 .35714)">
          <path d="M200 165H380L450 95M450 165H380M0 370L530 395M0 455L540 470M690 718L1200 737 1280 712 1490 722M40 795L305 812M440 915L513 922 510 1010M740 930L815 932 805 1120M1060 945L1185 955M1340 885L1390 865 1490 868M1340 885L1328 1022 1385 1032M430 1210L770 1220 870 1310 860 1568M665 1090L900 1300M805 1122L1045 1138M985 1095L1180 1100M985 1232L1110 1240M430 1295L573 1305 570 1390M675 1365L795 1372 805 1255M725 1240L720 1330 740 1320M415 1538L700 1545M1085 95V75L1160 72 1210 78M625 75L1085 95M1285 105L1480 115M1215 400L1342 410 1338 485 1215 480M925 320L920 560M920 410H1000M265 0L262 220M262 290L240 810M330 60V160M125 290L118 530M330 300L305 812M760 400L740 930M820 0L815 180M880 0V190M940 0L935 200M1070 630L1055 1060M1135 630V730M1275 640V712M990 1040L980 1410M900 625L895 730M1285 0L1280 200M1160 72V200M1110 100V200M730 1400L720 1568M800 1405V1568M560 1395L555 1540M1380 1090V1440M1285 1240V1430M1000 1240V1320L1040 1325M190 1080L220 1098 335 1095M460 1110H505M435 1105L462 1110V1165L435 1170M100 1000L95 1170 125 1180M500 1000L510 1210M1200 1150H1490M1190 1250H1490M590 1540V1400M280 1385L270 1568M640 1310V1568M1040 1415V1568M1265 1430V1568M1320 1435V1568"/>
          <path class="w6" d="M0 50L460 70M0 275L450 292 680 298 980 312 1090 322 1490 337M0 580L580 602M620 612L1050 625 1490 642M0 690L670 718M0 1005H70L100 980M265 0V60M395 0L392 500 375 850M365 1100L345 1568M690 0L685 300 670 960M1220 0L1210 330 1190 1040 1170 1568M1480 0L1465 600M1450 930L1435 1568M220 1380L560 1395 740 1405 1040 1415 1490 1440M665 1060L650 1310M65 0L50 500 40 790 30 1000 20 1320 0 1390M195 0L190 500 180 770 170 960 190 1020 178 1190 215 1340M1040 0L1035 300M460 0L450 450 435 910 420 1568M1020 0L1005 570 1000 800 920 1200 895 1290 940 1490V1568"/>
          <path class="w8" d="M100 985L620 1015 830 1028 1490 1062M0 1190H95L155 1225 215 1400 218 1568"/>
        </g>

        <use href="#highways" class="casing"/><use href="#highways" class="lane"/>

        <path class="border" d="M1715 786L1731 840 1733 904 1731 919 1736 1061 1737 1250 1735 1420 1734 1711 1733 1800"/>

        <g class="shields">
          <use href="#s-us" x="2081" y="843" width="44" height="40"/><text class="dark" x="2103" y="871">169</text>
          <use href="#s-int" x="1721" y="954" width="40" height="44"/><text x="1741" y="985">70</text>
          <use href="#s-int" x="2289" y="1009" width="40" height="44"/><text x="2309" y="1039">70</text>
          <use href="#s-int" x="1772" y="1232" width="46" height="44"/><text x="1795" y="1262">670</text>
          <use href="#s-int" x="2021" y="1230" width="40" height="44"/><text x="2041" y="1260">35</text>
          <use href="#s-int" x="2072" y="1368" width="40" height="44"/><text x="2092" y="1399">35</text>
          <use href="#s-int" x="2646" y="771" width="40" height="44"/>
          <use href="#s-int" x="1994" y="1783" width="40" height="44"/><text x="2014" y="1814">35</text>
          <use href="#s-us" x="2489" y="1295" width="44" height="40"/><text class="dark" x="2511" y="1322">71</text>
          <use href="#s-us" x="2666" y="1771" width="44" height="40"/><text class="dark" x="2688" y="1797">71</text>
        </g>

        <g class="labels">
          <text class="river"><textPath href="#river-line">Missouri River</textPath></text>
          <text transform="translate(2140 975) rotate(-12)">W 3rd St</text>
          <text transform="translate(1755 1102) rotate(2)">W 9th St</text>
          <text transform="translate(2342 1129) rotate(2)">E 9th St</text>
          <text transform="translate(2529 1171) rotate(2)">E 10th St</text>
          <text transform="translate(2375 1500) rotate(1)">E 19th St</text>
          <text transform="translate(2599 1616) rotate(2)">E 22nd St</text>
          <text class="avenue" transform="translate(2609 1033) rotate(2)">Independence Ave</text>
          <text transform="translate(2427 1643) rotate(-88)">Holmes St</text>
          <text transform="translate(2843 1573) rotate(-88)">Brooklyn Ave</text>
          <text text-anchor="end" transform="translate(2536 1711) rotate(-88)">Troost Ave</text>
          <text transform="translate(1960 1357) rotate(-73)">Beardsley Rd</text>
          <text transform="translate(2818 735) rotate(-15)">not</text>
          <g class="district">
            <text x="1866" y="1147">WEST BOTTOMS</text>
            <text x="2147" y="1146">DOWNTOWN</text><text x="2147" y="1171">KANSAS CITY</text>
            <text class="from" x="2758" y="902">PENDLETON</text><text class="from" x="2777" y="927">HEIGHTS</text>
            <text class="from" x="2142" y="1493">CROSSROADS</text>
            <text x="2290" y="1758">CROWN CENTER</text>
          </g>
          <text class="city" x="2220" y="1243">Kansas City</text>
          <g class="poi">
            <text x="2332" y="920">Arabia Steamboat</text><text x="2332" y="953">Museum</text>
            <text x="2015" y="1617">Union Station</text><text x="2034" y="1648">Kansas City</text>
            <text x="2669" y="1428" text-anchor="end">Negro Leagues</text><text x="2669" y="1461" text-anchor="end">Baseball Museum</text>
            <text class="food" x="2645" y="1246">Gates Bar-B-Q</text>
          </g>
        </g>

        <g fill="#a96df7">
          <use href="#p-poi" x="2271" y="897" width="52" height="62"/><use href="#p-museum" x="2285" y="910" width="24" height="24" fill="#fff"/>
          <use href="#p-poi" x="2679" y="1405" width="52" height="62"/><use href="#p-museum" x="2693" y="1418" width="24" height="24" fill="#fff"/>
          <use href="#p-poi" x="1714" y="1411" width="52" height="62"/><path fill="#fff" fill-rule="evenodd" d="M1732 1429h10l3 4h7v13h-24v-9h8zm8 4a5 5 0 1 0 .01 0zM1730 1427h2v3h3v2h-3v3h-2v-3h-3v-2h3z"/>
          <use href="#p-poi" x="2192" y="1593" width="52" height="62"/><path fill="#fff" d="M2210 1607h4v3h2v-3h4v3h2v-3h4v8l-3 2v6l4 5v3h-18v-3l4-5v-6l-3-2z"/>
          <use href="#p-poi" x="2828" y="1205" width="52" height="62" fill="#ee8a3f"/><path fill="#fff" d="M2844 1222h2v7h2v-7h2v10h-2v12h-2v-12h-2z"/>
        </g>

        <path class="route" d="M2243 920L2285 1529 2209 1569 2046 1638 2444 1058 2252 1259 2004 1850M2022 1850L2271 1302 2334 1431 2408 1744 2375 1860"/>
        <circle cx="2240" cy="899" r="27" fill="#fff" stroke="#63d44c" stroke-width="4"/><path d="M2234 888v22l17-11z" fill="#63d44c"/>
        <g class="pins" fill="#d77773">
          <use href="#p-pin" x="2422" y="993" width="44" height="66"/><text x="2444" y="1023">4</text>
          <use href="#p-pin" x="2230" y="1194" width="44" height="66"/><text x="2252" y="1224">5</text>
          <use href="#p-pin" x="2249" y="1238" width="44" height="66"/><text x="2271" y="1268">7</text>
          <use href="#p-pin" x="2263" y="1464" width="44" height="66"/><text x="2285" y="1494">1</text>
          <use href="#p-pin" x="2187" y="1505" width="44" height="66"/><text x="2209" y="1535">2</text>
          <use href="#p-pin" x="2024" y="1573" width="44" height="66"/><text x="2046" y="1603">3</text>
          <use href="#p-pin" x="2312" y="1366" width="44" height="66" fill="#0000e6"/><text x="2334" y="1396">8</text>
          <use href="#p-pin" x="2386" y="1680" width="44" height="66" fill="#0000e6"/><text x="2408" y="1710">9</text>
        </g>
      </svg>
      <div class="map-bar">
        <label class="switch"><input type="checkbox">Road view</label>
        <label class="switch"><input type="checkbox">Hold view</label>
        <div class="map-actions"><button class="chip">Move to route</button><button class="chip">Create route</button></div>
      </div>
      <button class="fullscreen" aria-label="Full screen"><svg><use href="#i-full"/></svg></button>
    </section>
  </aside>
</div>
<button class="fab" aria-label="Assistant"><svg><use href="#i-spark"/></svg></button>
</body>
</html>
```
FILE: styles.css
```css
* { box-sizing: border-box; margin: 0; padding: 0; }

:root {
  --soft: 0 28px 48px -12px rgba(0, 0, 0, .1);
  --edge: 0 4px 2px -2px rgba(0, 0, 0, .2), 0 2px 2px rgba(0, 0, 0, .14), 0 2px 6px rgba(0, 0, 0, .12);
}

body {
  display: flex;
  flex-direction: column;
  height: 100vh;
  overflow: hidden;
  background: #f5f5f5;
  color: #1f1f1f;
  font: 28px/52px "Noto Sans", sans-serif;
}

button { font: inherit; color: inherit; border: 0; background: none; }
svg { display: block; fill: currentColor; }
.sprite { position: absolute; width: 0; height: 0; }
.icon48 { width: 48px; height: 48px; }
.icon44 { width: 44px; height: 44px; }
.icon32 { width: 32px; height: 32px; color: #777; }
.ghost { display: flex; }

/* header */
.topbar {
  position: relative;
  z-index: 2;
  display: flex;
  justify-content: space-between;
  align-items: center;
  flex: none;
  height: 100px;
  padding: 0 48px 0 60px;
  border-top: 1px solid #000;
  background: #2e2e2e;
  color: #fff;
  box-shadow: 0 28px 60px -4px rgba(0, 0, 0, .1);
}
.brand { display: flex; align-items: center; color: #fff; text-decoration: none; font-family: Roboto, sans-serif; }
.brand-pin { width: 54px; height: 64px; margin-right: 8px; }
.brand-name { font-size: 52px; line-height: 60px; padding-bottom: 10px; }
.brand-sub { padding: 14px 0 0 2px; font-size: 18px; line-height: 20px; }
.topbar-tools { display: flex; align-items: center; gap: 52px; }
.avatar {
  position: relative;
  width: 80px;
  height: 80px;
  margin-left: -4px;
  border-radius: 50%;
  background: #8a6f65;
  font: 44px/80px Roboto, sans-serif;
}
.online {
  position: absolute;
  right: -1px;
  bottom: -1px;
  width: 24px;
  height: 24px;
  border: 4px solid #fff;
  border-radius: 50%;
  background: #67b534;
}

/* frame */
.shell {
  display: grid;
  grid-template-columns: 122px minmax(0, 1576fr) 6px minmax(0, 1176fr);
  grid-template-rows: minmax(0, 1fr);
  flex: 1;
  min-height: 0;
}
.sidebar {
  display: flex;
  flex-direction: column;
  align-items: center;
  gap: 16px;
  padding: 28px 0 64px;
  border-right: 2px solid #ddd;
  background: #fff;
}
.nav { display: flex; align-items: center; justify-content: center; flex: none; width: 80px; height: 80px; color: #808080; }
.boxed { border: 2px solid #ddd; border-radius: 16px; padding-left: 4px; }
.nav-end { margin-top: auto; }
.spark {
  border-radius: 50%;
  color: #fff;
  background: radial-gradient(circle at 30% 25%, #f5e08a 12%, #a9c865 38%, #49a838 75%);
}

/* stops */
.stops-pane { display: flex; flex-direction: column; min-height: 0; padding: 0 8px 0 30px; }
.toolbar { display: flex; align-items: center; gap: 20px; flex: none; padding: 20px 15px 22px 0; }
.btn {
  display: flex;
  align-items: center;
  height: 84px;
  padding: 0 20px;
  border: 2px solid #8f8f8f;
  border-radius: 16px;
  color: #2e2e2e;
  font-size: 30px;
  font-weight: 500;
  white-space: nowrap;
}
.btn:disabled { padding: 0 28px; border-color: #e6e6e6; color: #a3a3a3; }
.primary {
  gap: 16px;
  height: 82px;
  padding: 0 13px 0 20px;
  border: 0;
  background: #63d44c;
  color: #fff;
  box-shadow: 0 4px 6px rgba(0, 0, 0, .3);
}
.push { margin-left: auto; }
.card-tail { flex: none; height: 27px; border: 2px solid #eaeaea; border-top: 0; border-radius: 0 0 16px 16px; background: #fff; }
.route-start {
  display: flex;
  justify-content: space-between;
  align-items: center;
  flex: none;
  height: 100px;
  margin-top: 40px;
  padding: 0 31px 0 30px;
  border: 2px solid #eaeaea;
  border-radius: 16px;
  background: #eee;
  box-shadow: var(--soft);
}
.caption { color: #858585; font-size: 22px; line-height: 28px; }
.address { padding-bottom: 2px; font-weight: 700; line-height: 30px; }
.start-meta { display: flex; gap: 30px; }
.fact { display: flex; align-items: center; gap: 10px; font-weight: 500; white-space: nowrap; }
.stops { display: flex; flex-direction: column; gap: 20px; flex: 1; min-height: 0; padding-top: 16px; list-style: none; }
.stop {
  display: grid;
  grid-template-columns: 357fr 213fr 402fr 288fr 190fr 48px;
  align-items: center;
  flex: none;
  position: relative;
  padding: 5px 20px;
  border-radius: 16px;
  background: #fff;
  box-shadow: var(--edge);
}
.stop.done { background: #eee; }
.stop > * { min-width: 0; }
.stop h3 { font-size: 32px; font-weight: 700; white-space: nowrap; }
.marks { display: flex; align-items: center; gap: 20px; }
.up { width: 40px; height: 42px; }
.on-map { width: 40px; height: 36px; color: #37851f; }
.more { color: #2e2e2e; }

.splitter { align-self: center; height: 96px; margin-top: 388px; border-radius: 3px; background: #ddd; }

/* details */
.detail-pane { display: flex; flex-direction: column; min-height: 0; padding: 0 32px 0 9px; }
.panel-tail { flex: none; height: 28px; border-radius: 0 0 16px 16px; background: #fff; box-shadow: 0 12px 48px rgba(0, 0, 0, .14); }
h2 { flex: none; padding: 37px 0 13px; color: #000; font-size: 40px; font-weight: 500; line-height: 56px; }
h2.near { padding: 19px 0 12px; }
.panel { display: flex; align-items: center; flex: none; padding: 19px 0 19px 40px; border-radius: 16px; background: #fff; }
.raised { box-shadow: var(--edge); }
.soft { padding: 20px 48px 19px 41px; border: 1px solid #ebebeb; box-shadow: var(--soft); }
.facts { display: grid; grid-template-columns: 1fr 1fr; flex: 1; }
.facts div { display: flex; gap: 20px; white-space: nowrap; }
dt { color: #777; }
dd { font-weight: 500; }

.map { position: relative; flex: 1; min-height: 0; margin-top: 43px; border-radius: 16px 16px 0 0; overflow: hidden; }
.map-canvas { width: 100%; height: 100%; }
.map-canvas path { vector-effect: non-scaling-stroke; stroke-linejoin: round; }
.water { fill: #9fd8ea; }
.park { fill: #cdeed6; }
.grove { fill: #c0e6ca; }
.biz { fill: #f7f0e0; }
.plot { fill: #ebebeb; }
.clinic { fill: #f8e8e4; }
.air { fill: #e4eaf5; }
.runway { fill: none; stroke: #f1f5fd; stroke-width: 12px; }
.rail { fill: none; stroke: #d4d5d7; stroke-width: 2px; }
.ties { fill: none; stroke: #d4d5d7; stroke-width: 9px; stroke-dasharray: 2 33; }
.roads path { fill: none; stroke: #d9e0e6; stroke-width: 3px; }
.roads .w6 { stroke-width: 5px; }
.roads .w8 { stroke-width: 9px; }
.casing { fill: none; stroke: #768fb2; }
.lane { fill: none; stroke: #92a5c0; }
.casing { --wide: 15px; --slim: 8px; }
.lane { --wide: 11px; --slim: 4px; }
.w14 { stroke-width: var(--wide); }
#highways .w8 { stroke-width: var(--slim); stroke-linecap: round; }
.border { fill: none; stroke: #666; stroke-width: 1px; stroke-dasharray: 6 5; }
.route { fill: none; stroke: #4f9bd9; stroke-width: 6px; }

.map-canvas text { font-family: Roboto, sans-serif; paint-order: stroke; }
.shields text { fill: #fff; font-size: 18px; font-weight: 500; text-anchor: middle; }
.shields .dark { fill: #333; }
.labels text { fill: #33363a; font-size: 22px; stroke: #fff; stroke-width: 4px; stroke-linejoin: round; }
.labels .river { fill: #438d9d; font-size: 24px; stroke: none; }
.labels .avenue { fill: #3c4a66; }
.labels .district text { font-weight: 500; letter-spacing: 2px; text-anchor: middle; }
.labels .district .from { text-anchor: start; }
.labels .city { font-size: 52px; font-weight: 500; }
.labels .poi text { fill: #8146cf; font-size: 28px; }
.labels .poi .food { fill: #cb6127; }
.map-canvas .pins text { fill: #0000e6; font: 22px "Noto Sans", sans-serif; text-anchor: middle; }

.map-bar {
  position: absolute;
  top: 20px;
  left: 22px;
  display: flex;
  align-items: center;
  height: 84px;
  padding: 0 10px 0 15px;
  border: 1px solid #ebebeb;
  border-radius: 16px;
  background: #fff;
  box-shadow: 0 2px 6px rgba(0, 0, 0, .15);
}
.switch { display: flex; align-items: center; gap: 14px; margin-right: 18px; font-size: 32px; white-space: nowrap; }
.switch input {
  display: flex;
  align-items: center;
  width: 58px;
  height: 20px;
  border-radius: 10px;
  background: #ebebeb;
  appearance: none;
}
.switch input::before {
  content: "";
  width: 32px;
  height: 32px;
  border-radius: 50%;
  background: #fff;
  box-shadow: 0 2px 6px rgba(0, 0, 0, .25);
}
.map-actions { display: flex; gap: 10px; padding-left: 14px; }
.chip {
  height: 61px;
  padding: 0 20px;
  border-radius: 16px;
  background: #e0e0e0;
  font-size: 26px;
  font-weight: 500;
  box-shadow: 0 4px 6px rgba(0, 0, 0, .3);
}
.fullscreen {
  position: absolute;
  top: 20px;
  right: 18px;
  display: grid;
  place-items: center;
  width: 80px;
  height: 80px;
  border-radius: 4px;
  background: #fff;
  color: #666;
  box-shadow: 0 2px 6px rgba(0, 0, 0, .2);
}
.fullscreen svg { width: 36px; height: 36px; }

.fab {
  position: fixed;
  right: 50px;
  bottom: 50px;
  z-index: 3;
  width: 120px;
  height: 120px;
  border-radius: 50%;
  color: #fff;
  background:
    radial-gradient(circle at 35% 100%, #eaff62 10%, rgba(200, 255, 98, .5) 38%, transparent 62%),
    radial-gradient(circle at 85% 30%, #6fff63 15%, transparent 60%),
    #4db83a;
  box-shadow: 0 8px 24px rgba(0, 0, 0, .35);
}
.fab svg { width: 120px; height: 120px; }
```
